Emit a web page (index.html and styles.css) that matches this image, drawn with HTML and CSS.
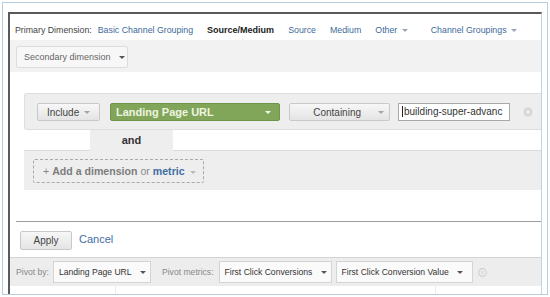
FILE: index.html
```html
<!DOCTYPE html>
<html>
<head>
    <title>Secondary dimension filter</title>
    <link rel="stylesheet" href="styles.css">
</head>
<body>

    <div class="frame">
        <div class="panel">

            <div class="dims">
                <span class="dims-label">Primary Dimension:</span>
                <a class="dim first">Basic Channel Grouping</a>
                <span class="dim current">Source/Medium</span>
                <a class="dim">Source</a>
                <a class="dim">Medium</a>
                <a class="dim">Other <span class="caret"></span></a>
                <a class="dim last">Channel Groupings <span class="caret"></span></a>
            </div>

            <div class="secondary">
                <button class="btn sec-btn">Secondary dimension <span class="caret dark"></span></button>
            </div>

            <div class="filter">
                <div class="cond">
                    <button class="btn include">Include <span class="caret"></span></button>
                    <div class="field">Landing Page URL <span class="caret white"></span></div>
                    <button class="btn match">Containing <span class="caret"></span></button>
                    <div class="value"><span class="cursor"></span>building-super-advanc</div>
                    <svg class="clear" width="10" height="10" viewBox="0 0 10 10">
                        <circle cx="5" cy="5" r="4.5" fill="#d6d6d6"/>
                        <path d="M3.3 3.3 L6.7 6.7 M6.7 3.3 L3.3 6.7" stroke="#f4f4f4" stroke-width="1.2"/>
                    </svg>
                </div>
                <div class="joiner">
                    <div class="blank"></div>
                    <div class="and">and</div>
                    <div class="blank wide"></div>
                </div>
                <div class="add-row">
                    <div class="add">+ <b>Add a dimension</b> or <b class="metric">metric</b> <span class="caret light"></span></div>
                </div>
            </div>

            <div class="actions">
                <button class="btn apply">Apply</button>
                <a class="cancel">Cancel</a>
            </div>

            <div class="pivot">
                <span class="pivot-label">Pivot by:</span>
                <div class="select by">Landing Page URL <span class="caret dark"></span></div>
                <span class="pivot-label metrics">Pivot metrics:</span>
                <div class="select m1">First Click Conversions <span class="caret dark"></span></div>
                <div class="select m2">First Click Conversion Value <span class="caret dark"></span></div>
                <svg class="pivot-clear" width="9" height="9" viewBox="0 0 10 10">
                    <circle cx="5" cy="5" r="4.3" fill="none" stroke="#cfcfcf" stroke-width="1.2"/>
                    <path d="M3.4 3.4 L6.6 6.6 M6.6 3.4 L3.4 6.6" stroke="#cfcfcf" stroke-width="1"/>
                </svg>
            </div>

            <div class="table-edge">
                <div class="col"></div>
                <div class="col"></div>
                <div class="col last"></div>
            </div>

        </div>
    </div>

</body>
</html>
```

FILE: styles.css
```css
body {
    margin: 0;
    background: #fff;
    font-family: "Liberation Sans", Arial, sans-serif;
}

.frame {
    margin: 2px;
    height: 293px;
    box-sizing: border-box;
    border: 1px solid #b8ccdb;
    padding: 9px 5px 0 5px;
    display: flex;
    flex-direction: column;
}

.panel {
    flex: 1;
    display: flex;
    flex-direction: column;
    border-top: 2px solid #5a5a5a;
    border-left: 2px solid #5a5a5a;
    border-right: 1px solid #c3d2dd;
}

/* primary dimension row */
.dims {
    height: 26px;
    box-sizing: border-box;
    padding: 11px 0 0 5px;
    font-size: 8.8px;
    display: flex;
    position: relative;
}

.dims-label {
    color: #444;
}

.dim {
    color: #3d6a9a;
    margin-left: 14px;
}

.dim.first {
    margin-left: 6px;
}

.dim.last {
    margin-left: 23px;
}

.dim.current {
    color: #222;
    font-weight: bold;
    font-size: 9px;
    position: relative;
}

/* little notch under the selected dimension */
.dim.current::after {
    content: "";
    position: absolute;
    left: 33px;
    top: 13px;
    border-left: 3px solid transparent;
    border-right: 3px solid transparent;
    border-bottom: 3px solid #f2f2f2;
}

.caret {
    display: inline-block;
    width: 0;
    height: 0;
    border-left: 3px solid transparent;
    border-right: 3px solid transparent;
    border-top: 3px solid #9aa6b3;
    vertical-align: middle;
    margin-left: 2px;
}

.caret.dark {
    border-top-color: #555;
}

.caret.white {
    border-top-color: #f4f7ee;
}

.caret.light {
    border-top-color: #bbb;
}

/* secondary dimension band */
.secondary {
    background: #f2f2f2;
    height: 32px;
    box-sizing: border-box;
    padding: 6px 0 0 6px;
}

.btn {
    font-family: "Liberation Sans", Arial, sans-serif;
    border: 1px solid #c9c9c9;
    border-radius: 2px;
    background: linear-gradient(#f7f7f7, #e4e4e4);
    color: #444;
    font-size: 10px;
    padding: 0;
    cursor: pointer;
}

.sec-btn {
    width: 112px;
    height: 22px;
    background: #f7f7f7;
    border-color: #dcdcdc;
    color: #666;
    font-size: 9px;
    text-align: left;
    padding-left: 7px;
}

.sec-btn .caret {
    margin-left: 6px;
}

/* filter builder */
.filter {
    margin: 21px 0 0 14px;
}

.cond {
    background: #eeeeee;
    border: 1px solid #dedede;
    border-right: none;
    border-radius: 3px 0 0 3px;
    height: 37px;
    box-sizing: border-box;
    padding: 9px 0 0 12px;
    display: flex;
    align-items: flex-start;
}

.include {
    width: 63px;
    height: 18px;
}

.field {
    margin-left: 10px;
    width: 170px;
    height: 18px;
    box-sizing: border-box;
    background: #82a659;
    border: 1px solid #6f9449;
    border-radius: 2px;
    color: #eef4e2;
    font-size: 11px;
    font-weight: bold;
    line-height: 16px;
    padding-left: 5px;
    display: flex;
    justify-content: space-between;
    align-items: center;
    padding-right: 8px;
}

.match {
    margin-left: 9px;
    width: 101px;
    height: 18px;
    padding-left: 18px;
}

.match .caret {
    margin-left: 14px;
}

.value {
    margin-left: 8px;
    width: 112px;
    height: 18px;
    box-sizing: border-box;
    background: #fff;
    border: 1px solid #a9a9a9;
    font-size: 10px;
    line-height: 16px;
    color: #333;
    padding-left: 3px;
    overflow: hidden;
    white-space: nowrap;
}

.cursor {
    display: inline-block;
    width: 1px;
    height: 11px;
    background: #222;
    vertical-align: -2px;
    margin-right: 1px;
}

.clear {
    margin: 4px 0 0 13px;
}

.joiner {
    display: flex;
    height: 21px;
}

.blank {
    width: 66px;
    background: #fff;
    border-bottom: 1px solid #dcdcdc;
    box-sizing: border-box;
}

.blank.wide {
    flex: 1;
    width: auto;
}

.and {
    width: 83px;
    background: #eeeeee;
    font-size: 11px;
    font-weight: bold;
    color: #333;
    text-align: center;
    line-height: 21px;
}

.add-row {
    background: #eeeeee;
    height: 39px;
    box-sizing: border-box;
    padding: 8px 0 0 9px;
}

.add {
    display: inline-block;
    width: 171px;
    height: 24px;
    box-sizing: border-box;
    border: 1px dashed #a9a9a9;
    border-radius: 2px;
    font-size: 10.6px;
    line-height: 22px;
    color: #888;
    padding-left: 9px;
}

.add b {
    color: #7d7d7d;
}

.add b.metric {
    color: #3f6ea3;
}

/* apply / cancel */
.actions {
    margin: 31px 0 0 6px;
    border-top: 1px solid #9e9e9e;
    padding: 9px 0 7px 4px;
    display: flex;
    align-items: center;
}

.apply {
    width: 52px;
    height: 19px;
}

.cancel {
    margin-left: 7px;
    font-size: 11px;
    color: #3f6ea3;
    margin-top: -3px;
}

/* pivot bar */
.pivot {
    height: 29px;
    box-sizing: border-box;
    background: #ededed;
    border-top: 1px solid #d3d3d3;
    display: flex;
    align-items: center;
    padding-left: 6px;
    font-size: 8.6px;
}

.pivot-label {
    color: #888;
}

.pivot-label.metrics {
    margin-left: 11px;
}

.select {
    height: 22px;
    box-sizing: border-box;
    background: #fafafa;
    border: 1px solid #d4d4d4;
    color: #333;
    line-height: 20px;
    padding-left: 5px;
    white-space: nowrap;
}

.select .caret {
    margin-left: 6px;
}

.select.by {
    margin-left: 4px;
    width: 98px;
}

.select.m1 {
    margin-left: 5px;
    width: 113px;
}

.select.m2 {
    margin-left: 4px;
    width: 137px;
}

.pivot-clear {
    margin-left: 5px;
}

.table-edge {
    flex: 1;
    display: flex;
}

.col {
    width: 115px;
    border-right: 1px solid #ececec;
}

.col:nth-child(2) {
    width: 350px;
}

.col.last {
    border-right: none;
}
```
